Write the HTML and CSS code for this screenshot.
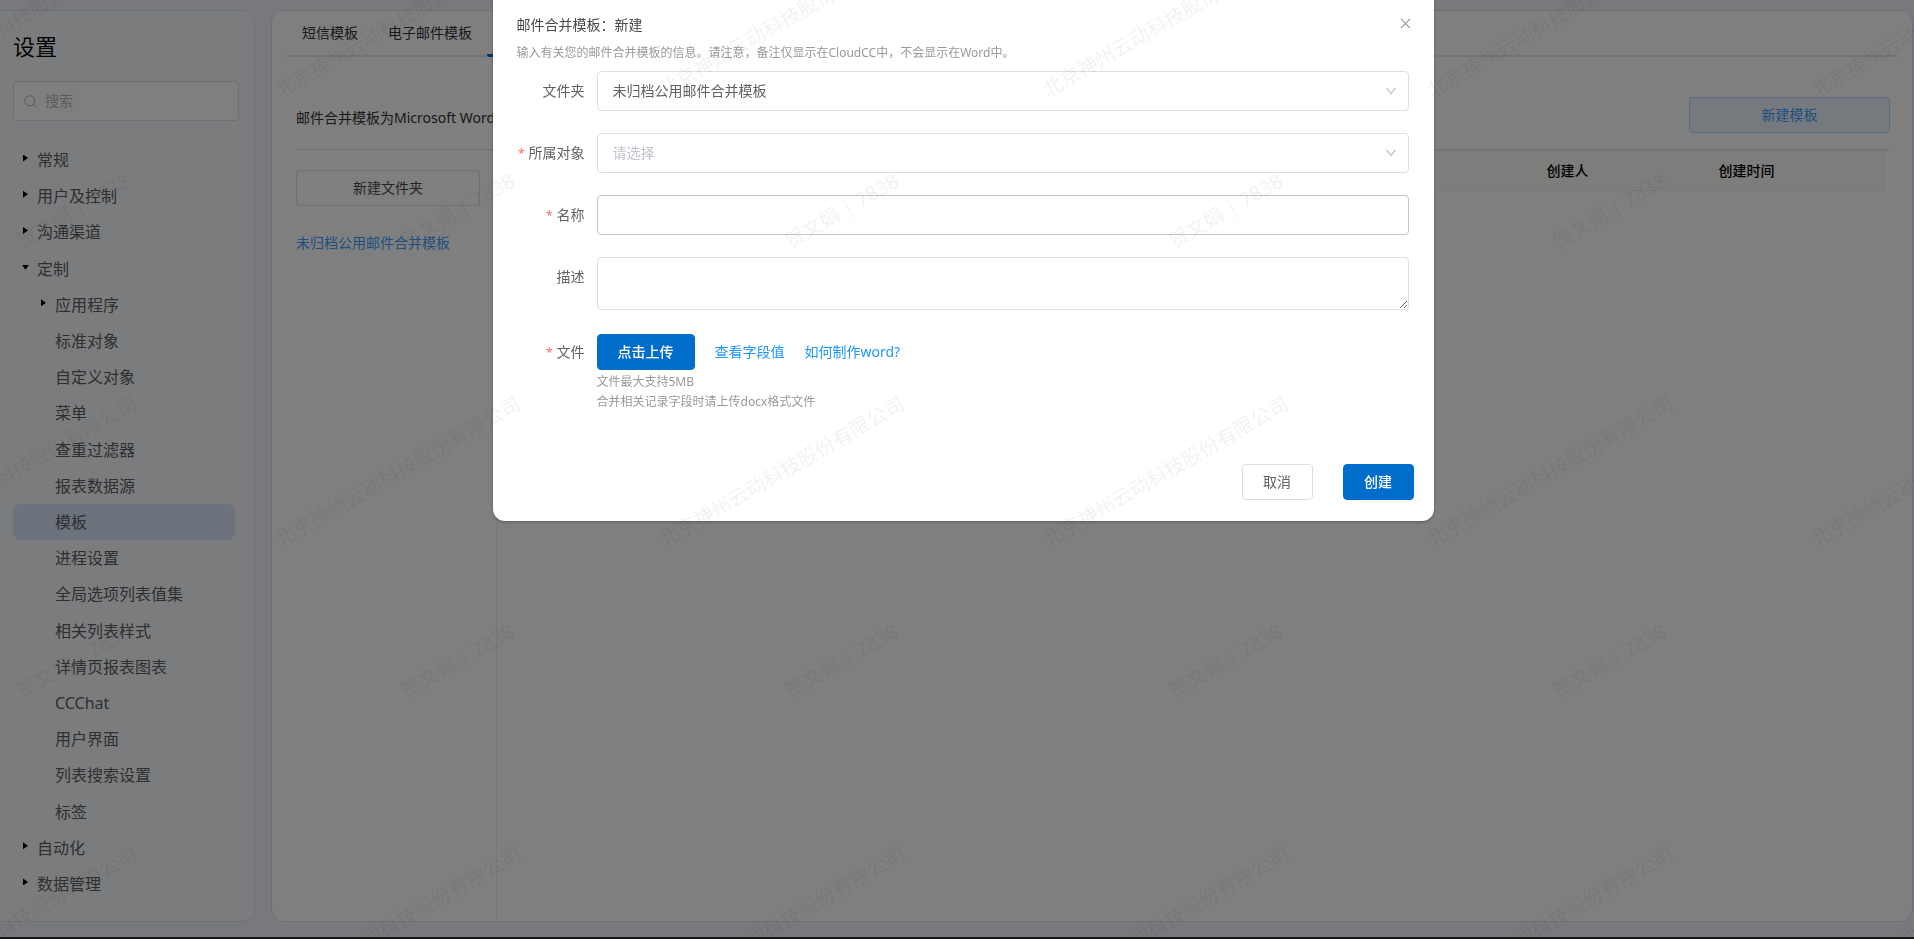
FILE: index.html
```html
<!DOCTYPE html>
<html lang="zh-CN">
<head>
<meta charset="utf-8">
<title>设置</title>
<link rel="stylesheet" href="styles.css">
</head>
<body>
<div class="page">
  <aside class="panel sidebar">
    <h1 class="sidebar-title">设置</h1>
    <label class="search">
      <svg class="search-icon" viewBox="0 0 14 14" aria-hidden="true"><circle cx="6.3" cy="6.3" r="5.4"/><path d="M10.3 10.3L13 13"/></svg>
      <input class="search-input" type="search" placeholder="搜索" aria-label="搜索">
    </label>
    <nav class="menu">
      <a class="item parent" href="#">常规</a>
      <a class="item parent" href="#">用户及控制</a>
      <a class="item parent" href="#">沟通渠道</a>
      <a class="item parent open" href="#">定制</a>
      <a class="item child parent" href="#">应用程序</a>
      <a class="item child" href="#">标准对象</a>
      <a class="item child" href="#">自定义对象</a>
      <a class="item child" href="#">菜单</a>
      <a class="item child" href="#">查重过滤器</a>
      <a class="item child" href="#">报表数据源</a>
      <a class="item child current" href="#">模板</a>
      <a class="item child" href="#">进程设置</a>
      <a class="item child" href="#">全局选项列表值集</a>
      <a class="item child" href="#">相关列表样式</a>
      <a class="item child" href="#">详情页报表图表</a>
      <a class="item child" href="#">CCChat</a>
      <a class="item child" href="#">用户界面</a>
      <a class="item child" href="#">列表搜索设置</a>
      <a class="item child" href="#">标签</a>
      <a class="item parent" href="#">自动化</a>
      <a class="item parent" href="#">数据管理</a>
    </nav>
  </aside>

  <main class="panel main">
    <nav class="tabs">
      <a class="tab" href="#">短信模板</a>
      <a class="tab" href="#">电子邮件模板</a>
      <a class="tab active" href="#" aria-current="page"></a>
    </nav>
    <div class="intro">
      <p class="intro-text">邮件合并模板为Microsoft Word</p>
      <button class="btn new-template" type="button">新建模板</button>
    </div>
    <div class="content">
      <section class="folders">
        <button class="btn new-folder" type="button">新建文件夹</button>
        <a class="folder-link" href="#">未归档公用邮件合并模板</a>
      </section>
      <section class="list">
        <table class="table">
          <thead><tr><th class="spacer"></th><th class="col">创建人</th><th class="col last">创建时间</th></tr></thead>
        </table>
      </section>
    </div>
  </main>
</div>
<div class="taskbar"></div>

<div class="overlay">
  <form class="dialog" role="dialog" aria-labelledby="dialog-title">
    <header class="dialog-head">
      <h2 class="dialog-title" id="dialog-title">邮件合并模板：新建</h2>
      <button class="close" type="button" aria-label="关闭"><svg viewBox="0 0 12 12"><path d="M1 1L11 11M11 1L1 11"/></svg></button>
    </header>
    <p class="dialog-note">输入有关您的邮件合并模板的信息。请注意，备注仅显示在CloudCC中，不会显示在Word中。</p>
    <div class="fields">
      <label class="label" for="folder">文件夹</label>
      <div class="select-wrap">
        <select class="control" id="folder"><option>未归档公用邮件合并模板</option></select>
        <svg class="chevron" viewBox="0 0 12 8" aria-hidden="true"><path d="M1.5 1L6 6.5L10.5 1"/></svg>
      </div>
      <label class="label required" for="object">所属对象</label>
      <div class="select-wrap">
        <select class="control empty" id="object"><option>请选择</option></select>
        <svg class="chevron" viewBox="0 0 12 8" aria-hidden="true"><path d="M1.5 1L6 6.5L10.5 1"/></svg>
      </div>
      <label class="label required" for="name">名称</label>
      <input class="control hovered" id="name" type="text">
      <label class="label" for="desc">描述</label>
      <textarea class="control area" id="desc"></textarea>
      <label class="label required" for="upload">文件</label>
      <div class="file">
        <div class="file-row">
          <button class="btn primary upload" id="upload" type="button">点击上传</button>
          <a class="link" href="#">查看字段值</a>
          <a class="link" href="#">如何制作word?</a>
        </div>
        <p class="hint">文件最大支持5MB</p>
        <p class="hint">合并相关记录字段时请上传docx格式文件</p>
      </div>
    </div>
    <footer class="dialog-foot">
      <button class="btn cancel" type="button">取消</button>
      <button class="btn primary" type="submit">创建</button>
    </footer>
  </form>
</div>

<svg class="watermark" aria-hidden="true">
  <defs>
    <text id="company" transform="rotate(-30)">北京神州云动科技股份有限公司</text>
    <text id="person" transform="rotate(-30)">贺文娟 | 7838</text>
    <g id="companies">
      <use href="#company" x="-104"/><use href="#company" x="280"/><use href="#company" x="664"/>
      <use href="#company" x="1048"/><use href="#company" x="1432"/><use href="#company" x="1816"/>
    </g>
    <g id="people">
      <use href="#person" x="22"/><use href="#person" x="406"/><use href="#person" x="790"/>
      <use href="#person" x="1174"/><use href="#person" x="1558"/>
    </g>
  </defs>
  <use href="#companies" y="98"/><use href="#people" y="249"/>
  <use href="#companies" y="548"/><use href="#people" y="699"/>
  <use href="#companies" y="998"/>
</svg>
</body>
</html>
```
FILE: styles.css
```css
* { box-sizing: border-box; }

body {
  margin: 0;
  height: 100vh;
  display: flex;
  flex-direction: column;
  overflow: hidden;
  background: #eef2f8;
  color: #303133;
  font: 14px/20px "Noto Sans", "Noto Sans CJK SC", sans-serif;
}

h1, h2, p { margin: 0; font-weight: 400; }
a { text-decoration: none; color: inherit; }
button, input, select, textarea { font: inherit; }

.page {
  flex: 1;
  min-height: 0;
  display: grid;
  grid-template-columns: 255px minmax(0, 1fr);
  gap: 16px;
  padding: 10px 1px 15px 0;
}

.panel {
  border: 1px solid #dde2ee;
  border-radius: 12px;
  background: #fff;
}

.taskbar { height: 2px; background: #28282c; }

/* Sidebar */
.sidebar {
  display: flex;
  flex-direction: column;
  padding: 19px 15px 19px 13px;
  border-left: 0;
  border-radius: 0 12px 12px 0;
  background: #f7f9fd;
}

.sidebar-title { font-size: 22px; line-height: 32px; color: #080707; }

.search {
  display: flex;
  align-items: center;
  gap: 8px;
  height: 40px;
  margin-top: 19px;
  padding: 0 10px;
  border: 1px solid #dcdfe6;
  border-radius: 4px;
  background: #fff;
}

.search-icon { width: 13px; height: 13px; fill: none; stroke: #a8abb2; }

.search-input {
  flex: 1;
  min-width: 0;
  padding: 0;
  border: 0;
  outline: 0;
  background: none;
}

.search-input::placeholder { color: #b4b8c0; }

.menu {
  flex: 1;
  display: grid;
  grid-auto-rows: 1fr;
  margin-top: 21px;
  margin-right: 4px;
}

.item {
  display: flex;
  align-items: center;
  padding-left: 24px;
  border-radius: 8px;
  color: #5c5e62;
  font-size: 16px;
  line-height: 24px;
}

.item.child { padding-left: 42px; }

.item.parent::before {
  content: "";
  width: 5px;
  height: 7px;
  margin: 0 9px 4px -14px;
  background: #000;
  clip-path: polygon(0 0, 100% 50%, 0 100%);
}

.item.open::before {
  width: 7px;
  height: 5px;
  margin: 0 8px 3px -15px;
  clip-path: polygon(0 0, 100% 0, 50% 100%);
}

.item.current { background: #d8e6f8; }

/* Main panel */
.main { display: flex; flex-direction: column; min-width: 0; }

.tabs {
  display: flex;
  height: 46px;
  margin: 0 15px;
  border-bottom: 2px solid #e4e7ed;
}

.tab { height: 46px; padding: 12px 15px 0; }
.tab.active { width: 114px; border-bottom: 3px solid #006dcc; border-radius: 2px; }

.intro {
  display: flex;
  justify-content: space-between;
  align-items: center;
  margin: 0 22px 0 24px;
  padding: 40px 0 16px;
  border-bottom: 1px solid #dcdfe6;
}

.intro-text { padding-top: 6px; }

.btn {
  height: 36px;
  padding: 0 20px;
  border: 1px solid #dcdfe6;
  border-radius: 4px;
  background: #fff;
  color: #606266;
  line-height: 20px;
}

.new-template {
  width: 201px;
  border-color: #b3d8ff;
  background: #ecf5ff;
  color: #409eff;
}

.content { flex: 1; display: flex; padding-left: 24px; }

.folders {
  display: flex;
  flex-direction: column;
  gap: 27px;
  width: 201px;
  padding: 20px 16px 0 0;
  border-right: 1px solid #ebeef5;
}

.new-folder { color: #48494c; }
.folder-link { color: #409eff; white-space: nowrap; }

.list { flex: 1; padding-right: 28px; }

.table {
  width: 100%;
  border-collapse: collapse;
  border: 1px solid #ebeef5;
  background: #fafaf7;
}

.table th {
  height: 40px;
  padding: 0;
  color: #000;
  font-weight: 500;
  text-align: left;
}

.table .col { width: 172px; }
.table .last { width: 165px; }
.table .spacer { width: auto; }

/* Dialog */
.overlay {
  position: fixed;
  inset: 0;
  display: flex;
  justify-content: center;
  align-items: flex-start;
  padding-left: 12px;
  background: rgba(0, 0, 0, 0.5);
}

.dialog {
  width: 941px;
  padding: 15px 16px 21px 24px;
  border-radius: 0 0 12px 12px;
  background: #fff;
  box-shadow: 0 1px 3px rgba(0, 0, 0, 0.3);
}

.dialog-head { display: flex; justify-content: space-between; }
.dialog-title { font-size: 14px; line-height: 20px; color: #48494c; }

.close {
  width: 24px;
  height: 16px;
  padding: 0;
  border: 0;
  background: none;
  line-height: 0;
}

.close svg { width: 11px; height: 11px; fill: none; stroke: #909399; stroke-width: 1.2; }

.dialog-note { margin-top: 8px; color: #999; font-size: 12px; }

.fields {
  display: grid;
  grid-template-columns: 68px minmax(0, 1fr);
  gap: 22px 12px;
  margin: 8px 9px 0 0;
}

.label { height: 40px; color: #606266; line-height: 40px; text-align: right; white-space: nowrap; }
.required::before { content: "*"; margin-right: 4px; color: #f56c6c; font-size: 12px; line-height: 1; }

.select-wrap { position: relative; }

.control {
  display: block;
  width: 100%;
  height: 40px;
  padding: 0 15px;
  border: 1px solid #dcdfe6;
  border-radius: 4px;
  outline: 0;
  background: #fff;
  color: #606266;
  appearance: none;
}

.control.empty { color: #c0c4cc; }
.control.hovered { border-color: #c0c4cc; }
.control.area { height: 53px; resize: vertical; }

.chevron {
  position: absolute;
  top: 16px;
  right: 12px;
  width: 12px;
  height: 8px;
  fill: none;
  stroke: #c0c4cc;
  stroke-width: 1.2;
  pointer-events: none;
}

.file-row { display: flex; align-items: center; height: 40px; }
.file-row .link { margin-left: 20px; color: #1e96ff; }
.btn.primary { border-color: #006dcc; background: #006dcc; color: #fff; font-weight: 500; }
.hint { color: #999; font-size: 12px; }

.dialog-foot {
  display: flex;
  justify-content: flex-end;
  gap: 30px;
  margin: 52px 4px 0 0;
}

.dialog-foot .btn { width: 71px; }

.watermark {
  position: fixed;
  inset: 0;
  width: 100%;
  height: 100%;
  fill: rgba(0, 0, 0, 0.055);
  font-size: 20px;
  pointer-events: none;
}
```
